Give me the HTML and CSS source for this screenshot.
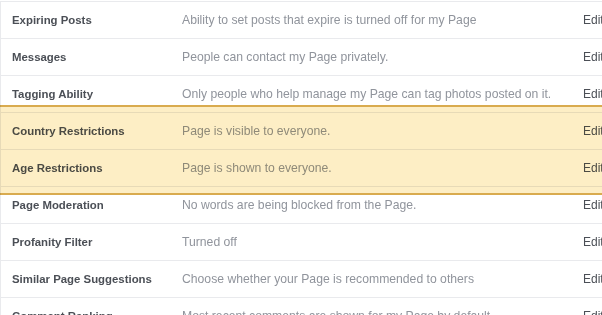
FILE: index.html
```html
<!DOCTYPE html>
<html lang="en">
<head>
    <meta charset="UTF-8">
    <meta name="viewport" content="width=device-width, initial-scale=1.0">
    <title>Page Settings</title>
    <link rel="stylesheet" href="styles.css">
</head>
<body>
    <div class="settings">
        <div class="row">
            <div class="label">Expiring Posts</div>
            <div class="desc">Ability to set posts that expire is turned off for my Page</div>
            <div class="edit">Edit</div>
        </div>
        <div class="row">
            <div class="label">Messages</div>
            <div class="desc">People can contact my Page privately.</div>
            <div class="edit">Edit</div>
        </div>
        <div class="row">
            <div class="label">Tagging Ability</div>
            <div class="desc">Only people who help manage my Page can tag photos posted on it.</div>
            <div class="edit">Edit</div>
        </div>
        <div class="row">
            <div class="label">Country Restrictions</div>
            <div class="desc">Page is visible to everyone.</div>
            <div class="edit">Edit</div>
        </div>
        <div class="row">
            <div class="label">Age Restrictions</div>
            <div class="desc">Page is shown to everyone.</div>
            <div class="edit">Edit</div>
        </div>
        <div class="row">
            <div class="label">Page Moderation</div>
            <div class="desc">No words are being blocked from the Page.</div>
            <div class="edit">Edit</div>
        </div>
        <div class="row">
            <div class="label">Profanity Filter</div>
            <div class="desc">Turned off</div>
            <div class="edit">Edit</div>
        </div>
        <div class="row">
            <div class="label">Similar Page Suggestions</div>
            <div class="desc">Choose whether your Page is recommended to others</div>
            <div class="edit">Edit</div>
        </div>
        <div class="row">
            <div class="label">Comment Ranking</div>
            <div class="desc">Most recent comments are shown for my Page by default.</div>
            <div class="edit">Edit</div>
        </div>

        <!-- highlight over the two restriction rows -->
        <div class="highlight"></div>
    </div>
</body>
</html>
```

FILE: styles.css
```css
body {
    margin: 0;
    padding: 0;
    background-color: #FFFFFF;
    font-family: "Liberation Sans", Arial, Helvetica, sans-serif;
    font-size: 12px;
    overflow: hidden;
}
.settings {
    position: relative;
    width: 640px;
    margin-top: 1px;
    border-left: 1px solid #E9EAED;
}
.row {
    display: flex;
    align-items: center;
    height: 36px;
    border-top: 1px solid #E9EAED;
}
.label {
    width: 170px;
    padding-left: 11px;
    flex-shrink: 0;
    font-size: 11.4px;
    font-weight: bold;
    color: #4B4F56;
}
.desc {
    width: 401px;
    flex-shrink: 0;
    font-size: 12.2px;
    color: #90949C;
    white-space: nowrap;
}
.edit {
    color: #4B4F56;
}
.highlight {
    position: absolute;
    left: -1px;
    right: 0;
    top: 104px;
    height: 86px;
    border-top: 2px solid #D9AB4F;
    border-bottom: 2px solid #D9AB4F;
    background-color: rgba(251, 222, 140, 0.5);
    mix-blend-mode: multiply;
}
```
